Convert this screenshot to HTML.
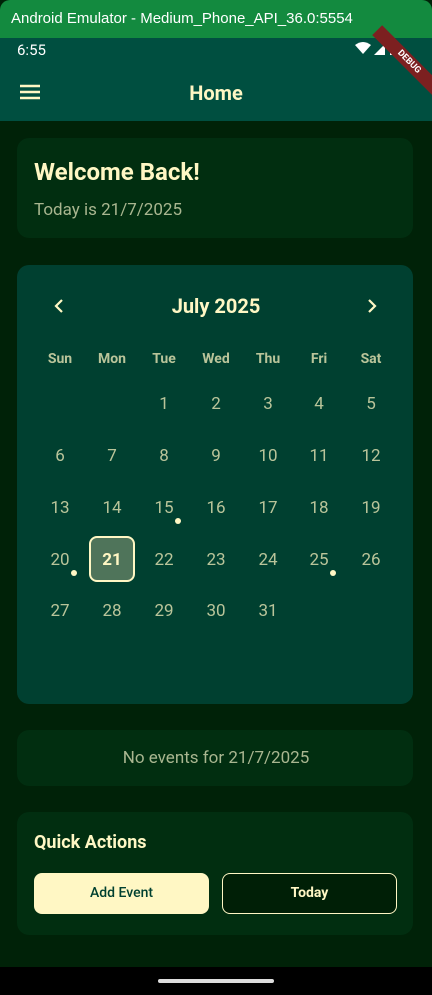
<!DOCTYPE html><html><head><style>
*{margin:0;padding:0;box-sizing:border-box}
body{width:432px;height:995px;background:#002208;font-family:"Roboto","Liberation Sans",sans-serif;position:relative;overflow:hidden}
.a{position:absolute}
.t{color:#fff7c4}
.d{position:absolute;width:40px;margin-left:-20px;text-align:center;font-size:17px;color:#b9c49a}
.h{position:absolute;width:40px;margin-left:-20px;text-align:center;font-size:14px;font-weight:bold;color:#b9c49a}
.dot{position:absolute;width:6px;height:6px;border-radius:3px;background:#fff7c4}
</style></head><body>
<div class="a" style="left:0;top:0;width:432px;height:38px;background:#138a3f;border-radius:10px 10px 0 0"></div>
<div class="a" style="left:11px;top:10px;color:#fff;font-size:15px;font-family:'Liberation Sans',sans-serif">Android Emulator - Medium_Phone_API_36.0:5554</div>
<div class="a" style="left:0;top:38px;width:432px;height:83px;background:#004f40"></div>
<div class="a" style="left:17px;top:41px;color:#fff;font-size:15px">6:55</div>
<svg class="a" style="left:355px;top:42px" width="50" height="14"><path d="M0 3 Q8 -3 16 3 L8 12Z" fill="#fff"/><path d="M19 13 L30 2 L30 13Z" fill="#fff"/><rect x="35" y="2" width="7" height="11" fill="#fff"/></svg>
<div class="a" style="left:364px;top:55px;width:90px;height:14px;background:#7c2020;transform:rotate(45deg);color:#fff;font-size:9px;font-weight:bold;text-align:center;line-height:14px">DEBUG</div>
<svg class="a" style="left:20px;top:84px" width="20" height="16"><path d="M0 2H20M0 8H20M0 14H20" stroke="#fff7c4" stroke-width="2.4"/></svg>
<div class="a t" style="left:0;width:432px;top:81px;text-align:center;font-size:20px;font-weight:bold">Home</div>
<div class="a" style="left:17px;top:138px;width:396px;height:100px;background:#012e10;border-radius:12px"></div>
<div class="a t" style="left:34px;top:158px;font-size:24px;font-weight:bold">Welcome Back!</div>
<div class="a" style="left:34px;top:200px;font-size:17px;color:#a9b690">Today is 21/7/2025</div>
<div class="a" style="left:17px;top:265px;width:396px;height:439px;background:#004030;border-radius:12px"></div>
<svg class="a" style="left:53px;top:298px" width="12" height="16"><path d="M9 2L3 8L9 14" stroke="#fff7c4" stroke-width="2.2" fill="none"/></svg>
<svg class="a" style="left:366px;top:298px" width="12" height="16"><path d="M3 2L9 8L3 14" stroke="#fff7c4" stroke-width="2.2" fill="none"/></svg>
<div class="a t" style="left:0;width:432px;top:294px;text-align:center;font-size:20px;font-weight:bold">July 2025</div>
<div class="h" style="left:60px;top:351px">Sun</div><div class="h" style="left:112px;top:351px">Mon</div><div class="h" style="left:164px;top:351px">Tue</div><div class="h" style="left:216px;top:351px">Wed</div><div class="h" style="left:268px;top:351px">Thu</div><div class="h" style="left:319px;top:351px">Fri</div><div class="h" style="left:371px;top:351px">Sat</div>
<div class="a" style="left:89px;top:536px;width:46px;height:46px;background:#4f745a;border:2px solid #fff7c4;border-radius:8px"></div>
<div class="d" style="left:164px;top:394px">1</div><div class="d" style="left:216px;top:394px">2</div><div class="d" style="left:268px;top:394px">3</div><div class="d" style="left:319px;top:394px">4</div><div class="d" style="left:371px;top:394px">5</div>
<div class="d" style="left:60px;top:446px">6</div><div class="d" style="left:112px;top:446px">7</div><div class="d" style="left:164px;top:446px">8</div><div class="d" style="left:216px;top:446px">9</div><div class="d" style="left:268px;top:446px">10</div><div class="d" style="left:319px;top:446px">11</div><div class="d" style="left:371px;top:446px">12</div>
<div class="d" style="left:60px;top:498px">13</div><div class="d" style="left:112px;top:498px">14</div><div class="d" style="left:164px;top:498px">15</div><div class="d" style="left:216px;top:498px">16</div><div class="d" style="left:268px;top:498px">17</div><div class="d" style="left:319px;top:498px">18</div><div class="d" style="left:371px;top:498px">19</div>
<div class="d" style="left:60px;top:550px">20</div><div class="d" style="left:112px;top:550px;color:#fff7c4;font-weight:bold">21</div><div class="d" style="left:164px;top:550px">22</div><div class="d" style="left:216px;top:550px">23</div><div class="d" style="left:268px;top:550px">24</div><div class="d" style="left:319px;top:550px">25</div><div class="d" style="left:371px;top:550px">26</div>
<div class="d" style="left:60px;top:601px">27</div><div class="d" style="left:112px;top:601px">28</div><div class="d" style="left:164px;top:601px">29</div><div class="d" style="left:216px;top:601px">30</div><div class="d" style="left:268px;top:601px">31</div>
<div class="dot" style="left:175px;top:518px"></div><div class="dot" style="left:71px;top:570px"></div><div class="dot" style="left:330px;top:570px"></div>
<div class="a" style="left:17px;top:730px;width:396px;height:56px;background:#012e10;border-radius:12px"></div>
<div class="a" style="left:0;width:432px;top:748px;text-align:center;font-size:17px;color:#a9b690">No events for 21/7/2025</div>
<div class="a" style="left:17px;top:812px;width:396px;height:123px;background:#012e10;border-radius:12px"></div>
<div class="a t" style="left:34px;top:832px;font-size:18px;font-weight:bold">Quick Actions</div>
<div class="a" style="left:34px;top:873px;width:175px;height:41px;background:#fff7c4;border-radius:8px;text-align:center;line-height:41px;font-size:14px;color:#004030;font-weight:500">Add Event</div>
<div class="a" style="left:222px;top:873px;width:175px;height:41px;border:1.5px solid #fff7c4;border-radius:8px;text-align:center;line-height:38px;font-size:14px;color:#fff7c4;font-weight:bold;background:#001f06">Today</div>
<div class="a" style="left:0;top:967px;width:432px;height:28px;background:#000"></div>
<div class="a" style="left:158px;top:979px;width:116px;height:4px;border-radius:2px;background:#ddd"></div>
</body></html>
